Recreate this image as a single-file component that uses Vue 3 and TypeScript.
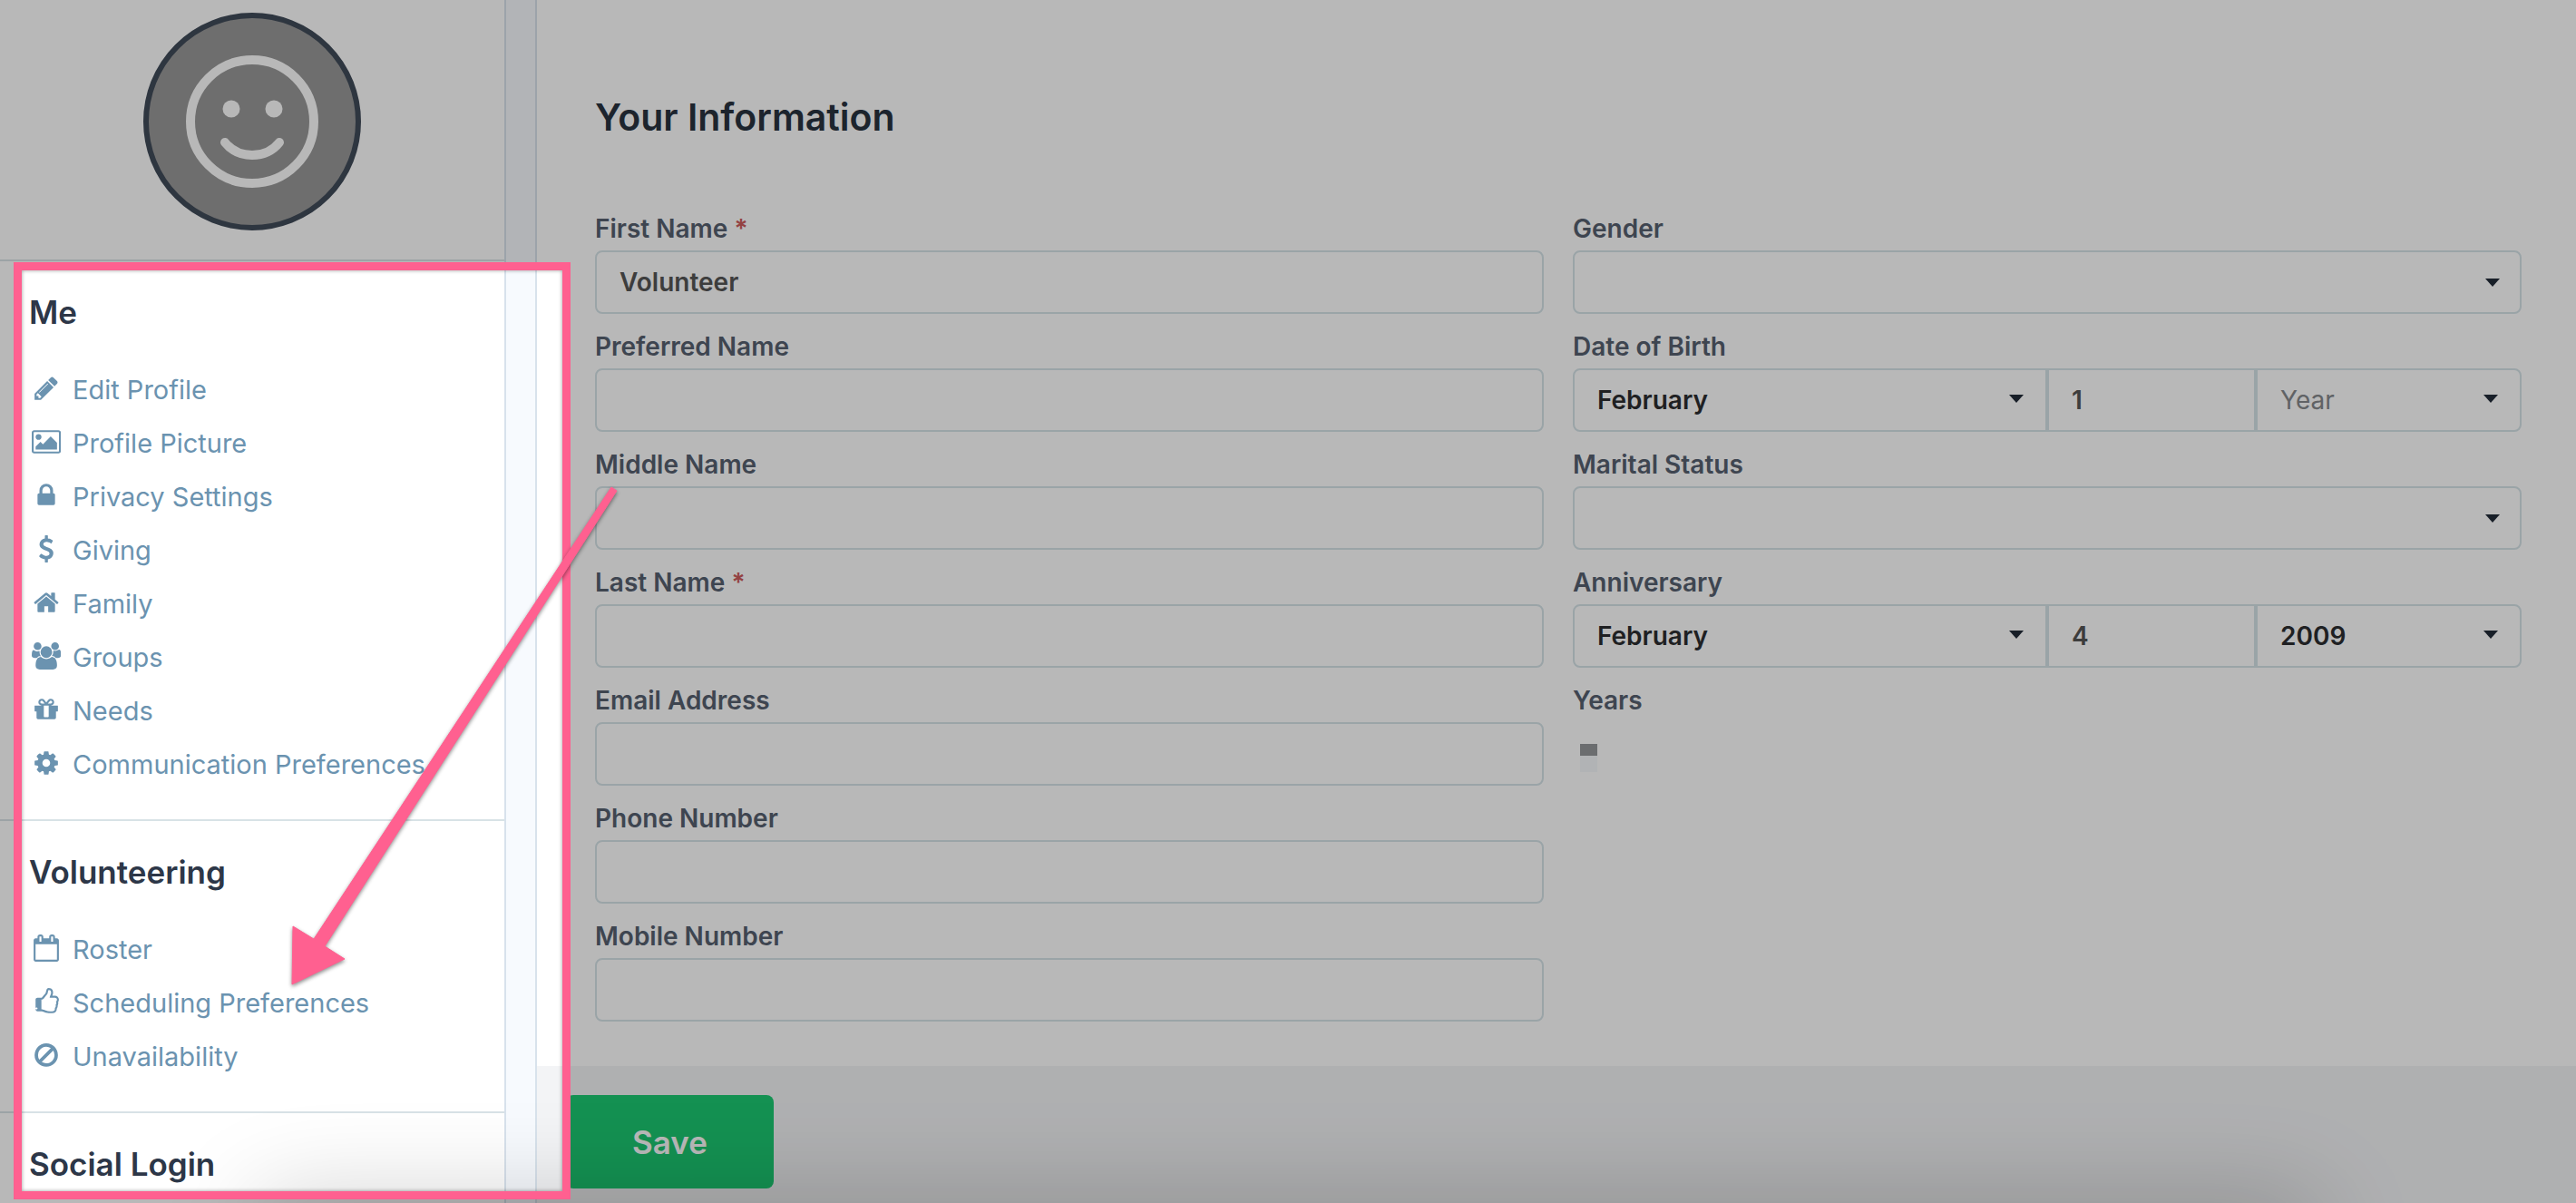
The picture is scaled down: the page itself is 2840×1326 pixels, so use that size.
<script setup lang="ts">
import { ref } from 'vue'

interface Icon {
  box: string
  path: string
}

interface NavItem {
  label: string
  icon: Icon
}

interface NavSection {
  title: string
  items: NavItem[]
}

const square = '0 0 1792 1792'
const wide = '0 0 1920 1792'

const icons: Record<string, Icon> = {
  pencil: {
    box: square,
    path: 'M491 1536l91-91-235-235-91 91v107h128v128h107zm523-928q0-22-22-22-10 0-17 7l-542 542q-7 7-7 17 0 22 22 22 10 0 17-7l542-542q7-7 7-17zm-54-192l416 416-832 832h-416v-416zm683 96q0 53-37 90l-166 166-416-416 166-165q36-38 90-38 53 0 91 38l235 234q37 39 37 91z',
  },
  picture: {
    box: wide,
    path: 'M640 576q0 80-56 136t-136 56-136-56-56-136 56-136 136-56 136 56 56 136zm1024 384v448h-1408v-192l320-320 160 160 512-512zm96-704h-1600q-13 0-22.5 9.5t-9.5 22.5v1216q0 13 9.5 22.5t22.5 9.5h1600q13 0 22.5-9.5t9.5-22.5v-1216q0-13-9.5-22.5t-22.5-9.5zm160 32v1216q0 66-47 113t-113 47h-1600q-66 0-113-47t-47-113v-1216q0-66 47-113t113-47h1600q66 0 113 47t47 113z',
  },
  lock: {
    box: square,
    path: 'M640 768h512v-192q0-106-75-181t-181-75-181 75-75 181v192zm832 96v576q0 40-28 68t-68 28h-960q-40 0-68-28t-28-68v-576q0-40 28-68t68-28h32v-192q0-184 132-316t316-132 316 132 132 316v192h32q40 0 68 28t28 68z',
  },
  dollar: {
    box: square,
    path: 'M1362 1185q0 153-99.5 263.5t-258.5 136.5v175q0 14-9 23t-23 9h-135q-13 0-22.5-9.5t-9.5-22.5v-175q-66-9-127.5-31t-101.5-44.5-74-48-46.5-37.5-17.5-18q-17-21-2-41l103-135q7-10 23-12 15-2 24 9l2 2q113 99 243 125 37 8 74 8 81 0 142.5-43t61.5-122q0-28-15-53t-33.5-42-58.5-37.5-66-32-80-32.5q-39-16-61.5-25t-61.5-26.5-62.5-31-56.5-35.5-53.5-42.5-43.5-49-35.5-58-21-66.5-8.5-78q0-138 98-242t255-134v-180q0-13 9.5-22.5t22.5-9.5h135q14 0 23 9t9 23v176q57 6 110.5 23t87 33.5 63.5 37.5 39 29 15 14q17 18 5 38l-81 146q-8 15-23 16-14 3-27-7-3-3-14.5-12t-39-26.5-58.5-32-74.5-26-85.5-11.5q-95 0-155 43t-60 111q0 26 8.5 48t29.5 41.5 39.5 33 56 31 60.5 27 70 27.5q53 20 81 31.5t76 35 75.5 42.5 62 50 53 63.5 31.5 76.5 13 94z',
  },
  home: {
    box: square,
    path: 'M1472 992v480q0 26-19 45t-45 19h-384v-384h-256v384h-384q-26 0-45-19t-19-45v-480q0-1 .5-3t.5-3l575-474 575 474q1 2 1 6zm223-69l-62 74q-8 9-21 11h-3q-13 0-21-7l-692-577-692 577q-12 8-24 7-13-2-21-11l-62-74q-8-10-7-23.5t11-21.5l719-599q32-26 76-26t76 26l244 204v-195q0-14 9-23t23-9h192q14 0 23 9t9 23v408l219 182q10 8 11 21.5t-7 23.5z',
  },
  users: {
    box: wide,
    path: 'M593 896q-162 5-265 128h-134q-82 0-138-40.5t-56-118.5q0-353 124-353 6 0 43.5 21t97.5 42.5 119 21.5q67 0 133-23-5 37-5 66 0 159 93 290zm1071 637q0 120-73 189.5t-194 69.5h-874q-121 0-194-69.5t-73-189.5q0-53 3.5-103.5t14-109 26.5-108.5 43-97.5 62-81 85.5-53.5 111.5-20q10 0 43 21.5t73 48 107 48 135 21.5 135-21.5 107-48 73-48 43-21.5q61 0 111.5 20t85.5 53.5 62 81 43 97.5 26.5 108.5 14 109 3.5 103.5zm-1024-1277q0 106-75 181t-181 75-181-75-75-181 75-181 181-75 181 75 75 181zm704 384q0 159-112.5 271.5t-271.5 112.5-271.5-112.5-112.5-271.5 112.5-271.5 271.5-112.5 271.5 112.5 112.5 271.5zm576 225q0 78-56 118.5t-138 40.5h-134q-103-123-265-128 93-131 93-290 0-29-5-66 66 23 133 23 59 0 119-21.5t97.5-42.5 43.5-21q124 0 124 353zm-128-609q0 106-75 181t-181 75-181-75-75-181 75-181 181-75 181 75 75 181z',
  },
  gift: {
    box: square,
    path: 'M1056 1356v-716h-320v716q0 25 18 38.5t46 13.5h192q28 0 46-13.5t18-38.5zm-456-844h195l-126-161q-26-31-69-31-40 0-68 28t-28 68 28 68 68 28zm688-96q0-40-28-68t-68-28q-43 0-69 31l-125 161h194q40 0 68-28t28-68zm376 256v320q0 14-9 23t-23 9h-96v416q0 40-28 68t-68 28h-1088q-40 0-68-28t-28-68v-416h-96q-14 0-23-9t-9-23v-320q0-14 9-23t23-9h440q-93 0-158.5-65.5t-65.5-158.5 65.5-158.5 158.5-65.5q107 0 168 77l128 165 128-165q61-77 168-77 93 0 158.5 65.5t65.5 158.5-65.5 158.5-158.5 65.5h440q14 0 23 9t9 23z',
  },
  cog: {
    box: square,
    path: 'M1152 896q0-106-75-181t-181-75-181 75-75 181 75 181 181 75 181-75 75-181zm512-109v222q0 12-8 23t-20 13l-185 28q-19 54-39 91 35 50 107 138 10 12 10 25t-9 23q-27 37-99 108t-94 71q-12 0-26-9l-138-108q-44 23-91 38-16 136-29 186-7 28-36 28h-222q-14 0-24.5-8.5t-11.5-21.5l-28-184q-49-16-90-37l-141 107q-10 9-25 9-14 0-25-11-126-114-165-168-7-10-7-23 0-12 8-23 15-21 51-66.5t54-70.5q-27-50-41-99l-183-27q-13-2-21-12.5t-8-23.5v-222q0-12 8-23t19-13l186-28q14-46 39-92-40-57-107-138-10-12-10-24 0-10 9-23 26-36 98.5-107.5t94.5-71.5q13 0 26 10l138 107q44-23 91-38 16-136 29-186 7-28 36-28h222q14 0 24.5 8.5t11.5 21.5l28 184q49 16 90 37l142-107q9-9 24-9 13 0 25 10 129 119 165 170 7 8 7 22 0 12-8 23-15 21-51 66.5t-54 70.5q26 50 41 98l183 28q13 2 21 12.5t8 23.5z',
  },
  calendar: {
    box: square,
    path: 'M192 1664h1408v-1024h-1408v1024zm384-1216v-288q0-14-9-23t-23-9h-64q-14 0-23 9t-9 23v288q0 14 9 23t23 9h64q14 0 23-9t9-23zm768 0v-288q0-14-9-23t-23-9h-64q-14 0-23 9t-9 23v288q0 14 9 23t23 9h64q14 0 23-9t9-23zm384-64v1280q0 52-38 90t-90 38h-1408q-52 0-90-38t-38-90v-1280q0-52 38-90t90-38h128v-96q0-66 47-113t113-47h64q66 0 113 47t47 113v96h384v-96q0-66 47-113t113-47h64q66 0 113 47t47 113v96h128q52 0 90 38t38 90z',
  },
  thumb: {
    box: '-64 0 1792 1792',
    path: 'M256 1344q0-26-19-45t-45-19-45 19-19 45 19 45 45 19 45-19 19-45zm1280-576q0-51-39-89.5t-89-38.5h-352q0-58 48-159.5t48-160.5q0-98-32-145t-128-47q-26 26-38 85t-30.5 125.5-59.5 109.5q-22 23-77 91-4 5-23 30t-31.5 41-34.5 42.5-40 44-38.5 35.5-40 27-35.5 9h-32v640h32q13 0 31.5 3t33 6.5 38 11 35 11.5 35.5 12.5 29 10.5q211 73 342 73h121q192 0 192-167 0-26-5-56 30-16 47.5-52.5t17.5-73.5-18-69q53-50 53-119 0-25-10-55.5t-25-47.5q32-1 53.5-47t21.5-81zm128-1q0 89-49 163 9 33 9 69 0 77-38 144 3 21 3 43 0 101-60 178 1 139-85 219.5t-227 80.5h-129q-96 0-189.5-22.5t-216.5-65.5q-116-40-138-40h-288q-53 0-90.5-37.5t-37.5-90.5v-640q0-53 37.5-90.5t90.5-37.5h274q36-24 137-155 58-75 107-128 24-25 35.5-85.5t30.5-126.5 62-108q39-37 90-37 84 0 151 32.5t102 101.5 35 186q0 93-48 192h176q104 0 180 76t76 179z',
  },
  ban: {
    box: square,
    path: 'M1440 893q0-161-87-295l-754 753q137 89 297 89 111 0 211.5-43.5t173.5-116.5 116-174.5 43-212.5zm-999 299l755-754q-135-91-300-91-148 0-273 73t-198 199-73 274q0 162 89 299zm1223-299q0 157-61 300t-163.5 246-245 164-298.5 61-298.5-61-245-164-163.5-246-61-300 61-299.5 163.5-245.5 245-164 298.5-61 298.5 61 245 164 163.5 245.5 61 299.5z',
  },
}

const sections: NavSection[] = [
  {
    title: 'Me',
    items: [
      { label: 'Edit Profile', icon: icons.pencil },
      { label: 'Profile Picture', icon: icons.picture },
      { label: 'Privacy Settings', icon: icons.lock },
      { label: 'Giving', icon: icons.dollar },
      { label: 'Family', icon: icons.home },
      { label: 'Groups', icon: icons.users },
      { label: 'Needs', icon: icons.gift },
      { label: 'Communication Preferences', icon: icons.cog },
    ],
  },
  {
    title: 'Volunteering',
    items: [
      { label: 'Roster', icon: icons.calendar },
      { label: 'Scheduling Preferences', icon: icons.thumb },
      { label: 'Unavailability', icon: icons.ban },
    ],
  },
  { title: 'Social Login', items: [] },
]

const nameFields = ref([
  { id: 'first-name', label: 'First Name', required: true, value: 'Volunteer' },
  { id: 'preferred-name', label: 'Preferred Name', required: false, value: '' },
  { id: 'middle-name', label: 'Middle Name', required: false, value: '' },
  { id: 'last-name', label: 'Last Name', required: true, value: '' },
  { id: 'email', label: 'Email Address', required: false, value: '' },
  { id: 'phone', label: 'Phone Number', required: false, value: '' },
  { id: 'mobile', label: 'Mobile Number', required: false, value: '' },
])

const gender = ref('')
const maritalStatus = ref('')
const birth = ref({ month: 'February', day: '1', year: '' })
const anniversary = ref({ month: 'February', day: '4', year: '2009' })
</script>

<template>
  <div class="page">
    <aside class="sidebar">
      <div class="profile">
        <div class="avatar">
          <svg viewBox="0 0 146 146" aria-hidden="true">
            <circle cx="73" cy="73" r="68" fill="none" stroke="#fff" stroke-width="10" />
            <circle cx="50" cy="59" r="9.5" fill="#fff" />
            <circle cx="97" cy="59" r="9.5" fill="#fff" />
            <path d="M43 96Q54 110 73 110T103 96" fill="none" stroke="#fff" stroke-width="10" stroke-linecap="round" />
          </svg>
        </div>
      </div>
      <nav v-for="section in sections" :key="section.title" class="section" :aria-label="section.title">
        <h2>{{ section.title }}</h2>
        <ul v-if="section.items.length">
          <li v-for="item in section.items" :key="item.label">
            <a href="#">
              <span class="icon">
                <svg :viewBox="item.icon.box" aria-hidden="true"><path :d="item.icon.path" /></svg>
              </span>
              <span>{{ item.label }}</span>
            </a>
          </li>
        </ul>
      </nav>
    </aside>
    <div class="gutter"></div>
    <main class="main">
      <form @submit.prevent>
        <div class="body">
          <h1>Your Information</h1>
          <div class="columns">
            <div class="column">
              <div v-for="field in nameFields" :key="field.id" class="field">
                <label :for="field.id">{{ field.label }} <span v-if="field.required" class="required">*</span></label>
                <input :id="field.id" v-model="field.value" class="control" type="text" />
              </div>
            </div>
            <div class="column">
              <div class="field">
                <label for="gender">Gender</label>
                <span class="select">
                  <select id="gender" v-model="gender" class="control"><option value=""></option></select>
                </span>
              </div>
              <div class="field">
                <label for="birth-month">Date of Birth</label>
                <div class="date">
                  <span class="select month">
                    <select id="birth-month" v-model="birth.month" class="control"><option>February</option></select>
                  </span>
                  <input v-model="birth.day" class="control day" type="text" aria-label="Day of birth" />
                  <span class="select year">
                    <select v-model="birth.year" class="control empty" aria-label="Year of birth"><option value="">Year</option></select>
                  </span>
                </div>
              </div>
              <div class="field">
                <label for="marital">Marital Status</label>
                <span class="select">
                  <select id="marital" v-model="maritalStatus" class="control"><option value=""></option></select>
                </span>
              </div>
              <div class="field">
                <label for="anniversary-month">Anniversary</label>
                <div class="date">
                  <span class="select month">
                    <select id="anniversary-month" v-model="anniversary.month" class="control"><option>February</option></select>
                  </span>
                  <input v-model="anniversary.day" class="control day" type="text" aria-label="Anniversary day" />
                  <span class="select year">
                    <select v-model="anniversary.year" class="control" aria-label="Anniversary year"><option>2009</option></select>
                  </span>
                </div>
              </div>
              <div class="field">
                <span class="label">Years</span>
                <div class="redacted"></div>
              </div>
            </div>
          </div>
        </div>
        <footer class="actions">
          <button type="submit">Save</button>
        </footer>
      </form>
    </main>

    <div class="glow"></div>
    <div class="spotlight"></div>
    <svg class="arrow" viewBox="0 0 400 600" aria-hidden="true">
      <path d="M374 17L380 21L58 523L80 537L22 565L23 501L46 515Z" fill="#ff6090" stroke="#ff6090" stroke-width="1" />
    </svg>
  </div>
</template>

<style>
body {
  background: #fff;
}
</style>

<style scoped>
.page {
  position: relative;
  display: flex;
  height: 100vh;
  overflow: hidden;
  font-family: Inter, "Liberation Sans", sans-serif;
  font-size: 28px;
  color: #2d3748;
}

.page * {
  box-sizing: border-box;
}

.sidebar {
  flex: 0 0 558px;
  border-right: 2px solid #d8e2ec;
}

.profile {
  display: flex;
  justify-content: center;
  padding: 14px 0 32px;
  border-bottom: 2px solid #d8e2e6;
}

.avatar {
  display: flex;
  align-items: center;
  justify-content: center;
  width: 240px;
  height: 240px;
  border: 6px solid #414b59;
  border-radius: 50%;
  background: #999;
}

.avatar svg {
  width: 146px;
  height: 146px;
}

.section {
  padding: 35px 32px 31px;
  border-bottom: 2px solid #d8e2e6;
}

h2 {
  margin: 0;
  font-size: 35px;
  font-weight: 600;
  line-height: 42px;
}

ul {
  margin: 35px 0 0;
  padding: 0;
  list-style: none;
}

a {
  display: flex;
  align-items: center;
  gap: 13px;
  padding-left: 3px;
  font-size: 29px;
  line-height: 59px;
  color: #6b93b0;
  text-decoration: none;
  white-space: nowrap;
}

.icon {
  display: flex;
  justify-content: center;
  width: 32px;
  padding-bottom: 4px;
}

.icon svg {
  flex: none;
  height: 30px;
  fill: currentColor;
}

.gutter {
  flex: 0 0 34px;
  border-right: 2px solid #d8e2ec;
  background: #f7fafe;
}

.main {
  flex: 1;
  min-width: 0;
}

form {
  display: flex;
  flex-direction: column;
  height: 100%;
}

.body {
  padding: 104px 60px 49px 64px;
}

h1 {
  margin: 0 0 80px;
  font-size: 41px;
  font-weight: 600;
  line-height: 50px;
  color: #29323f;
}

.columns {
  display: grid;
  grid-template-columns: 1fr 1fr;
  gap: 32px;
}

.column {
  display: flex;
  flex-direction: column;
  gap: 18px;
}

.field {
  display: flex;
  flex-direction: column;
  gap: 6px;
}

label,
.label {
  font-weight: 600;
  line-height: 36px;
  color: #566070;
}

.required {
  color: #cd5c5c;
}

.control {
  width: 100%;
  height: 70px;
  margin: 0;
  padding: 0 25px;
  border: 2px solid #d6e3e8;
  border-radius: 8px;
  outline: 0;
  background: #fff;
  font: inherit;
  font-weight: 600;
  color: #555;
}

select.control {
  appearance: none;
  color: #2b2d30;
}

select.control.empty {
  font-weight: 400;
  color: #85888c;
}

.select {
  position: relative;
  display: block;
}

.select::after {
  content: "";
  position: absolute;
  top: 31px;
  right: 24px;
  border: solid transparent;
  border-width: 9px 8px 0;
  border-top-color: #222b38;
  pointer-events: none;
}

.date .select::after {
  top: 29px;
  right: 26px;
}

.date {
  display: grid;
  grid-template-columns: 50fr 22fr 28fr;
}

.month .control {
  border-radius: 8px 0 0 8px;
}

.day {
  border-radius: 0;
}

.year .control {
  border-radius: 0 8px 8px 0;
}

.redacted {
  width: 19px;
  height: 31px;
  margin: 24px 8px;
  background: linear-gradient(#95979a 13px, #f6f8fb 13px);
}

.actions {
  flex: 1;
  padding: 32px;
  background: #f3f4f6;
}

button {
  width: 229px;
  height: 103px;
  border: 0;
  border-radius: 8px;
  background: #1cc972;
  font: inherit;
  font-size: 35px;
  font-weight: 600;
  color: #fff;
}

.glow {
  position: absolute;
  top: 100%;
  right: 10%;
  left: 10%;
  height: 80px;
  border-radius: 20px;
  box-shadow: 0 0 110px rgba(0, 0, 0, 0.22);
}

.spotlight {
  position: absolute;
  top: 289px;
  bottom: 4px;
  left: 15px;
  width: 614px;
  border: 9px solid #ff6090;
  box-shadow: 0 0 0 3000px rgba(0, 0, 0, 0.278), inset 0 0 4px rgba(0, 0, 0, 0.4);
}

.arrow {
  position: absolute;
  top: 520px;
  left: 300px;
  width: 400px;
  height: 600px;
  filter: drop-shadow(0 2px 2px rgba(0, 0, 0, 0.45));
}
</style>
